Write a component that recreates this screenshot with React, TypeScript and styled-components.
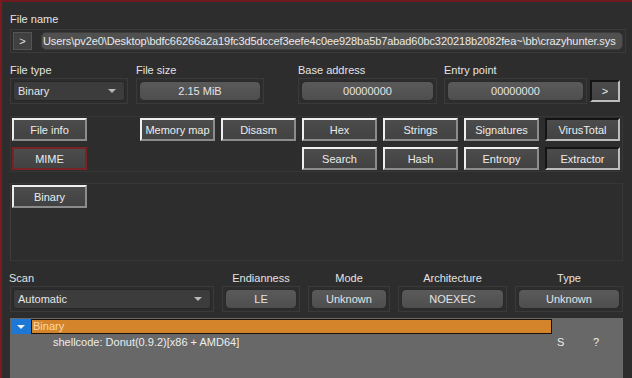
import styled, { createGlobalStyle } from 'styled-components'

const GlobalStyle = createGlobalStyle`
  html, body {
    margin: 0;
    padding: 0;
    background-color: #2d2d2d;
  }
  * {
    box-sizing: border-box;
  }
`

const Window = styled.div`
  width: 632px;
  height: 378px;
  overflow: hidden;
  background-color: #2d2d2d;
  border-top: 2px solid #6e1a1e;
  border-left: 2px solid #7c1a20;
  padding: 0 9px 0 8px;
  display: flex;
  flex-direction: column;
  font-family: 'Liberation Sans', Arial, sans-serif;
  font-size: 11px;
  color: #e2e2e2;
`

const Label = styled.div<{ $center?: boolean; $mt?: number; $ml?: number }>`
  height: 14px;
  line-height: 14px;
  margin-top: ${(p) => p.$mt ?? 0}px;
  margin-left: ${(p) => p.$ml ?? 0}px;
  margin-bottom: 1px;
  text-align: ${(p) => (p.$center ? 'center' : 'left')};
  color: #e4e4e4;
  white-space: nowrap;
`

const Frame = styled.div`
  border: 1px solid #3a3a3a;
  padding: 2px;
  display: flex;
  align-items: center;
  gap: 9px;
`

const PathRow = styled(Frame)`
  margin-top: 2px;
  margin-right: -3px;
`

const SmallArrowButton = styled.button`
  width: 19px;
  height: 18px;
  padding: 0;
  border: 1px solid #555;
  background-color: #404040;
  color: #e0e0e0;
  font-family: inherit;
  font-size: 11px;
  flex-shrink: 0;
`

const PathField = styled.div`
  flex: 1;
  min-width: 0;
  height: 18px;
  border-radius: 5px;
  background-color: #505050;
  border: 1px solid #3c3c3c;
  display: flex;
  align-items: center;
  padding-left: 1px;
  color: #eaeaea;
  white-space: nowrap;
  letter-spacing: -0.09px;
`

const FieldRow = styled.div<{ $mt: number }>`
  display: flex;
  align-items: flex-end;
  margin-top: ${(p) => p.$mt}px;
`

const Group = styled.div<{ $w: number; $ml?: number }>`
  width: ${(p) => p.$w}px;
  margin-left: ${(p) => p.$ml ?? 0}px;
  display: flex;
  flex-direction: column;
  flex-shrink: 0;
`

const EndSlot = styled.div`
  margin-left: 3px;
  margin-bottom: 2px;
  display: flex;
`

const Combo = styled.div`
  flex: 1;
  height: 20px;
  border-radius: 3px;
  border: 1px solid #262626;
  background-color: #3c3c3c;
  display: flex;
  align-items: center;
  justify-content: space-between;
  padding: 0 8px 0 4px;
  color: #e6e6e6;
`

const ComboArrow = styled.span`
  width: 0;
  height: 0;
  border-left: 4px solid transparent;
  border-right: 4px solid transparent;
  border-top: 4px solid #b8b8b8;
`

const ValueBox = styled.div`
  flex: 1;
  height: 20px;
  border-radius: 5px;
  border: 1px solid #2a2a2a;
  background: linear-gradient(#5a5a5a, #4e4e4e);
  display: flex;
  align-items: center;
  justify-content: center;
  color: #e4e4e4;
`

const BevelButton = styled.button<{ $w?: number; $h?: number; $sunken?: boolean; $alert?: boolean }>`
  width: ${(p) => p.$w ?? 75}px;
  height: ${(p) => p.$h ?? 23}px;
  padding: 0;
  font-family: inherit;
  font-size: 11px;
  color: #ececec;
  background: linear-gradient(#4c4c4c, #424242);
  border: 2px solid;
  border-color: ${(p) =>
    p.$alert
      ? '#7a2326'
      : p.$sunken
        ? '#141414 #bdbdbd #bdbdbd #141414'
        : '#efefef #8c8c8c #8c8c8c #efefef'};
  flex-shrink: 0;
`

const ButtonFrame = styled.div`
  margin-top: 12px;
  border: 1px solid #373737;
  padding: 1px 2px 1px 1px;
  display: flex;
  justify-content: space-between;
`

const LeftColumn = styled.div`
  display: flex;
  flex-direction: column;
  gap: 6px;
`

const ToolGrid = styled.div`
  display: grid;
  grid-template-columns: repeat(6, 75px);
  column-gap: 6px;
  row-gap: 6px;
`

const GridSpot = styled.div<{ $col: number }>`
  grid-column-start: ${(p) => p.$col};
  display: flex;
`

const TypePanel = styled.div`
  margin-top: 11px;
  height: 78px;
  border: 1px solid #373737;
  border-left-color: #3e3e3e;
  padding: 1px 0 0 1px;
`

const TreeArea = styled.div`
  margin-top: 6px;
  flex: 1;
  background-color: #686868;
  padding-top: 1px;
  padding-left: 1px;
`

const TreeRow = styled.div`
  display: grid;
  grid-template-columns: 20px 521px 36px 1fr;
  height: 15px;
  align-items: center;
`

const Expander = styled.div`
  height: 15px;
  background-color: #1c78d4;
  display: flex;
  align-items: center;
  justify-content: center;
`

const ExpandTriangle = styled.span`
  width: 0;
  height: 0;
  border-left: 4px solid transparent;
  border-right: 4px solid transparent;
  border-top: 4px solid #f0f0f0;
`

const SelectedName = styled.div`
  height: 15px;
  background-color: #d4852b;
  border: 1px solid #1a1208;
  padding-left: 1px;
  line-height: 13px;
  color: #fbd9ae;
`

const NodeName = styled.div<{ $indent: number }>`
  padding-left: ${(p) => p.$indent}px;
  color: #ededed;
  white-space: nowrap;
`

const Cell = styled.div`
  padding-left: 5px;
  color: #ededed;
`

const rowTwo = [
  { label: 'File type', w: 118, ml: 0, kind: 'combo', value: 'Binary' },
  { label: 'File size', w: 128, ml: 8, kind: 'box', value: '2.15 MiB' },
  { label: 'Base address', w: 139, ml: 34, kind: 'box', value: '00000000' },
  { label: 'Entry point', w: 143, ml: 7, kind: 'box', value: '00000000' },
]

const scanRow = [
  { label: 'Endianness', w: 78, value: 'LE' },
  { label: 'Mode', w: 82, value: 'Unknown' },
  { label: 'Architecture', w: 109, value: 'NOEXEC' },
  { label: 'Type', w: 108, value: 'Unknown' },
]

const tools: { name: string; col?: number; sunken?: boolean }[] = [
  { name: 'Memory map' },
  { name: 'Disasm' },
  { name: 'Hex' },
  { name: 'Strings' },
  { name: 'Signatures' },
  { name: 'VirusTotal', sunken: true },
  { name: 'Search', col: 3 },
  { name: 'Hash' },
  { name: 'Entropy' },
  { name: 'Extractor', sunken: true },
]

export default function App() {
  return (
    <>
      <GlobalStyle />
      <Window>
        <Label $mt={10}>File name</Label>
        <PathRow>
          <SmallArrowButton>&gt;</SmallArrowButton>
          <PathField>
            Users\pv2e0\Desktop\bdfc66266a2a19fc3d5dccef3eefe4c0ee928ba5b7abad60bc320218b2082fea~\bb\crazyhunter.sys
          </PathField>
        </PathRow>

        <FieldRow $mt={10}>
          {rowTwo.map((f) => (
            <Group key={f.label} $w={f.w} $ml={f.ml}>
              <Label>{f.label}</Label>
              <Frame>
                {f.kind === 'combo' ? (
                  <Combo>
                    {f.value}
                    <ComboArrow />
                  </Combo>
                ) : (
                  <ValueBox>{f.value}</ValueBox>
                )}
              </Frame>
            </Group>
          ))}
          <EndSlot>
            <BevelButton $w={30} $h={22} $sunken>
              &gt;
            </BevelButton>
          </EndSlot>
        </FieldRow>

        <ButtonFrame>
          <LeftColumn>
            <BevelButton>File info</BevelButton>
            <BevelButton $alert>MIME</BevelButton>
          </LeftColumn>
          <ToolGrid>
            {tools.map((t) => (
              <GridSpot key={t.name} $col={t.col ?? 0}>
                <BevelButton $sunken={t.sunken}>{t.name}</BevelButton>
              </GridSpot>
            ))}
          </ToolGrid>
        </ButtonFrame>

        <TypePanel>
          <BevelButton>Binary</BevelButton>
        </TypePanel>

        <FieldRow $mt={10}>
          <Group $w={204}>
            <Label $ml={-1}>Scan</Label>
            <Frame>
              <Combo>
                Automatic
                <ComboArrow />
              </Combo>
            </Frame>
          </Group>
          {scanRow.map((f) => (
            <Group key={f.label} $w={f.w} $ml={8}>
              <Label $center>{f.label}</Label>
              <Frame>
                <ValueBox>{f.value}</ValueBox>
              </Frame>
            </Group>
          ))}
        </FieldRow>

        <TreeArea>
          <TreeRow>
            <Expander>
              <ExpandTriangle />
            </Expander>
            <SelectedName>Binary</SelectedName>
            <span />
            <span />
          </TreeRow>
          <TreeRow>
            <span />
            <NodeName $indent={22}>shellcode: Donut(0.9.2)[x86 + AMD64]</NodeName>
            <Cell>S</Cell>
            <Cell>?</Cell>
          </TreeRow>
        </TreeArea>
      </Window>
    </>
  )
}
